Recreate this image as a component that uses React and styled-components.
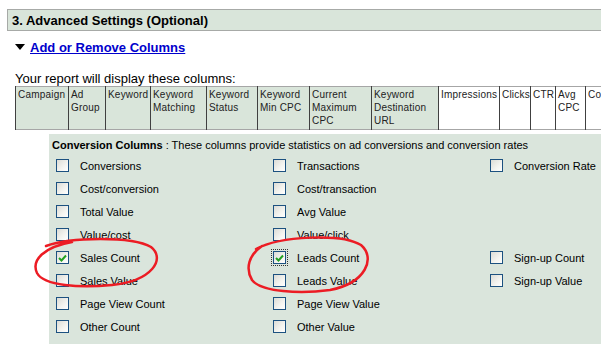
import styled, { createGlobalStyle } from 'styled-components'

const GlobalStyle = createGlobalStyle`
  body {
    margin: 0;
    background: #ffffff;
    font-family: Tahoma, 'Liberation Sans', sans-serif;
  }
`

const Page = styled.div`
  position: relative;
  width: 601px;
  height: 348px;
  overflow: hidden;
`

const SectionHeader = styled.div`
  margin: 9px 0 0 7px;
  height: 20px;
  background: #d9e5da;
  border: 1px solid #a7aaa7;
  border-right: none;
  display: flex;
  align-items: center;
  padding-left: 4px;
  font-family: 'Liberation Sans', sans-serif;
  font-weight: bold;
  font-size: 13px;
  color: #000;
`

const ToggleRow = styled.div`
  display: flex;
  align-items: center;
  margin: 8px 0 0 15px;
  height: 16px;
`

const Triangle = styled.span`
  width: 0;
  height: 0;
  border-left: 5px solid transparent;
  border-right: 5px solid transparent;
  border-top: 6px solid #000;
  margin-right: 5px;
`

const ToggleLink = styled.a`
  font-family: 'Liberation Sans', sans-serif;
  font-weight: bold;
  font-size: 13px;
  color: #0000cc;
  text-decoration: underline;
  cursor: pointer;
`

const Caption = styled.div`
  margin: 17px 0 0 15px;
  font-family: 'Liberation Sans', sans-serif;
  font-size: 13px;
  line-height: 14px;
  color: #000;
`

const ColumnsTable = styled.table`
  margin-left: 15px;
  border-collapse: collapse;
  table-layout: fixed;
  width: 600px;
  height: 44px;
  font-family: 'Liberation Sans', sans-serif;
  font-size: 10px;
  letter-spacing: 0.2px;
  line-height: 13px;
  border-top: 1px solid #a6a6a6;
  border-bottom: 1px solid #a6a6a6;
`

const HeadCell = styled.td`
  vertical-align: top;
  padding: 1px 2px;
  overflow: hidden;
  white-space: ${p => (p.$clip ? 'nowrap' : 'normal')};
  background: ${p => (p.$active ? '#d9e5da' : '#ffffff')};
  border-left: 1px solid #404040;
  color: #222;
`

const ConversionPanel = styled.div`
  margin: 4px 0 0 49px;
  height: 206px;
  background: #dae5dc;
  padding: 4px 0 0 3px;
  font-family: 'Liberation Sans', sans-serif;
  font-size: 11px;
  color: #000;
`

const PanelTitle = styled.div`
  line-height: 14px;
  b {
    font-weight: bold;
  }
`

const OptionGrid = styled.div`
  display: grid;
  grid-template-columns: 217px 217px 1fr;
  grid-auto-rows: 23px;
  margin: 2px 0 0 4px;
`

const Option = styled.label`
  display: flex;
  align-items: center;
  gap: 11px;
  font-size: 11px;
`

const Box = styled.span`
  width: 11px;
  height: 11px;
  border: 1px solid #1c5180;
  background: linear-gradient(135deg, #dcdcd6 0%, #f4f4f0 60%, #ffffff 100%);
  display: inline-flex;
  align-items: center;
  justify-content: center;
  outline: ${p => (p.$focus ? '1px dotted #333' : 'none')};
  outline-offset: 1px;
`

const Scribble = styled.svg`
  position: absolute;
  left: 0;
  top: 0;
  pointer-events: none;
`

const columns = [
  { label: 'Campaign', w: 53, on: true },
  { label: 'Ad Group', w: 37, on: true },
  { label: 'Keyword', w: 45, on: true },
  { label: 'Keyword Matching', w: 56, on: true },
  { label: 'Keyword Status', w: 51, on: true },
  { label: 'Keyword Min CPC', w: 52, on: true },
  { label: 'Current Maximum CPC', w: 62, on: true },
  { label: 'Keyword Destination URL', w: 67, on: true },
  { label: 'Impressions', w: 61 },
  { label: 'Clicks', w: 31 },
  { label: 'CTR', w: 25 },
  { label: 'Avg CPC', w: 30 },
  { label: 'Co', w: 50, clip: true },
]

const options = [
  ['Conversions', 'Transactions', 'Conversion Rate'],
  ['Cost/conversion', 'Cost/transaction', null],
  ['Total Value', 'Avg Value', null],
  ['Value/cost', 'Value/click', null],
  ['Sales Count', 'Leads Count', 'Sign-up Count'],
  ['Sales Value', 'Leads Value', 'Sign-up Value'],
  ['Page View Count', 'Page View Value', null],
  ['Other Count', 'Other Value', null],
]

const checked = ['Sales Count', 'Leads Count']

const Check = () => (
  <svg width='9' height='8' viewBox='0 0 9 8'>
    <path d='M1 4 L3.5 6.5 L8 1.5' fill='none' stroke='#21a121' strokeWidth='2' />
  </svg>
)

const App = () => (
  <Page>
    <GlobalStyle />
    <SectionHeader>3. Advanced Settings (Optional)</SectionHeader>
    <ToggleRow>
      <Triangle />
      <ToggleLink>Add or Remove Columns</ToggleLink>
    </ToggleRow>
    <Caption>Your report will display these columns:</Caption>
    <ColumnsTable>
      <colgroup>
        {columns.map(c => (
          <col key={c.label} style={{ width: c.w }} />
        ))}
      </colgroup>
      <tbody>
        <tr>
          {columns.map(c => (
            <HeadCell key={c.label} $active={c.on} $clip={c.clip}>
              {c.label}
            </HeadCell>
          ))}
        </tr>
      </tbody>
    </ColumnsTable>
    <ConversionPanel>
      <PanelTitle>
        <b>Conversion Columns</b> : These columns provide statistics on ad conversions and
        conversion rates
      </PanelTitle>
      <OptionGrid>
        {options.flat().map((name, i) =>
          name ? (
            <Option key={name}>
              <Box $focus={name === 'Leads Count'}>{checked.includes(name) && <Check />}</Box>
              {name}
            </Option>
          ) : (
            <span key={i} />
          )
        )}
      </OptionGrid>
    </ConversionPanel>
    <Scribble width='601' height='348'>
      <path
        d='M46 246 C 70 237, 132 236, 151 247 C 166 259, 152 281, 112 285 C 80 288, 44 286, 37 273 C 31 260, 44 247, 72 242'
        fill='none'
        stroke='#ec1c24'
        strokeWidth='2.5'
        strokeLinecap='round'
      />
      <path
        d='M256 249 C 280 236, 342 233, 361 245 C 376 258, 366 283, 330 290 C 300 294, 261 292, 252 280 C 245 268, 249 255, 262 246'
        fill='none'
        stroke='#ec1c24'
        strokeWidth='2.5'
        strokeLinecap='round'
      />
    </Scribble>
  </Page>
)

export default App
